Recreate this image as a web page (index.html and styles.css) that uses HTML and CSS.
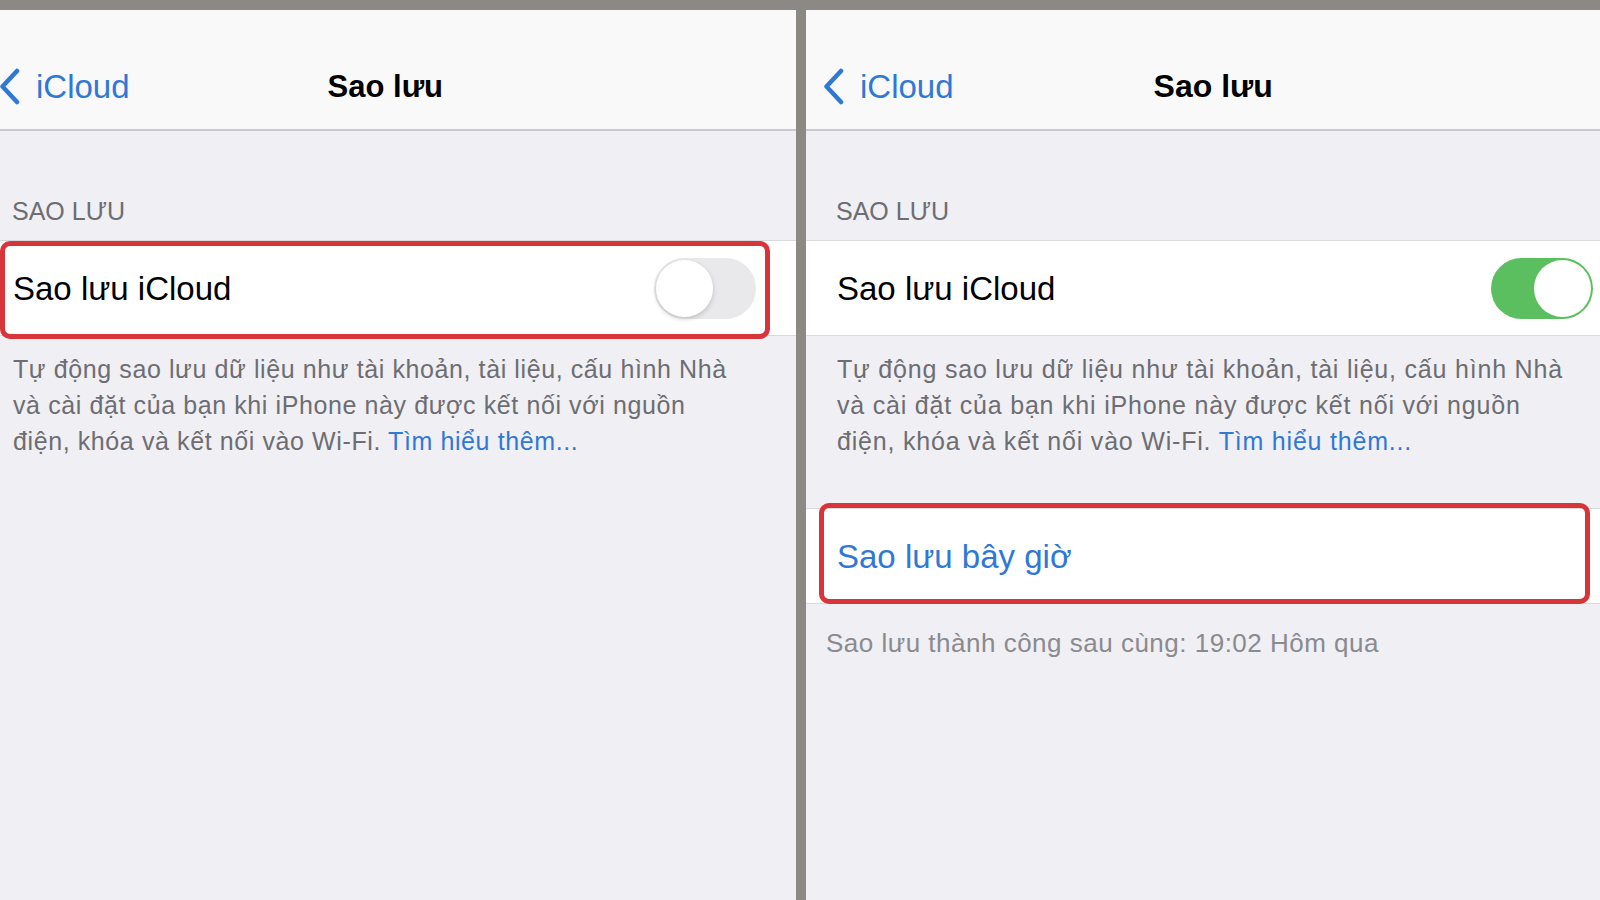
FILE: index.html
```html
<!DOCTYPE html>
<html lang="vi">
<head>
    <meta charset="UTF-8">
    <meta name="viewport" content="width=device-width, initial-scale=1.0">
    <title>Sao lưu iCloud</title>
    <link rel="stylesheet" href="styles.css">
</head>
<body>
    <div class="topbar"></div>

    <div class="split">
        <!-- Before: backup switched off -->
        <div class="panel panel-left">
            <section class="screen">
                <header class="navbar">
                    <a href="#" class="back">
                        <svg class="chevron" width="23" height="37" viewBox="0 0 23 37">
                            <path d="M19 3 L4.5 18.5 L19 34" fill="none" stroke="currentColor" stroke-width="4.5" stroke-linecap="round" stroke-linejoin="round"/>
                        </svg>
                        <span>iCloud</span>
                    </a>
                    <h1 class="title">Sao lưu</h1>
                </header>

                <div class="content">
                    <div class="group-label">SAO LƯU</div>
                    <div class="cell cell-toggle marked">
                        <span class="cell-text">Sao lưu iCloud</span>
                        <span class="switch"><span class="knob"></span></span>
                    </div>
                    <p class="group-footer">
                        Tự động sao lưu dữ liệu như tài khoản, tài liệu, cấu hình Nhà<br>
                        và cài đặt của bạn khi iPhone này được kết nối với nguồn<br>
                        điện, khóa và kết nối vào Wi-Fi. <a href="#">Tìm hiểu thêm...</a>
                    </p>
                </div>
            </section>
        </div>

        <div class="divider"></div>

        <!-- After: backup switched on -->
        <div class="panel panel-right">
            <section class="screen">
                <header class="navbar">
                    <a href="#" class="back">
                        <svg class="chevron" width="23" height="37" viewBox="0 0 23 37">
                            <path d="M19 3 L4.5 18.5 L19 34" fill="none" stroke="currentColor" stroke-width="4.5" stroke-linecap="round" stroke-linejoin="round"/>
                        </svg>
                        <span>iCloud</span>
                    </a>
                    <h1 class="title">Sao lưu</h1>
                </header>

                <div class="content">
                    <div class="group-label">SAO LƯU</div>
                    <div class="cell cell-toggle">
                        <span class="cell-text">Sao lưu iCloud</span>
                        <span class="switch on"><span class="knob"></span></span>
                    </div>
                    <p class="group-footer">
                        Tự động sao lưu dữ liệu như tài khoản, tài liệu, cấu hình Nhà<br>
                        và cài đặt của bạn khi iPhone này được kết nối với nguồn<br>
                        điện, khóa và kết nối vào Wi-Fi. <a href="#">Tìm hiểu thêm...</a>
                    </p>

                    <div class="cell cell-action marked">
                        <a href="#" class="cell-link">Sao lưu bây giờ</a>
                    </div>
                    <p class="last-backup">Sao lưu thành công sau cùng: 19:02 Hôm qua</p>
                </div>
            </section>
        </div>
    </div>
</body>
</html>
```

FILE: styles.css
```css
* {
    box-sizing: border-box;
    margin: 0;
    padding: 0;
    font-family: 'Liberation Sans', Arial, sans-serif;
}

html, body {
    width: 1600px;
    height: 900px;
    overflow: hidden;
}

body {
    background-color: #8c8985;
    color: #000;
}

a {
    text-decoration: none;
}

.topbar {
    height: 10px;
    background-color: #8c8985;
}

.split {
    display: flex;
    height: 890px;
}

.panel {
    overflow: hidden;
    background-color: #efeff4;
}

.panel-left {
    width: 796px;
}

.panel-right {
    flex: 1;
}

.divider {
    width: 10px;
    background-color: #8c8985;
}

.screen {
    height: 100%;
}

.panel-left .screen {
    margin-left: -18px;
    width: 814px;
}

/* navigation bar */

.navbar {
    display: flex;
    align-items: center;
    height: 121px;
    padding: 34px 0 0 16px;
    background-color: #f9f9fa;
    border-bottom: 2px solid #c9c9cd;
}

.back {
    display: flex;
    align-items: center;
    gap: 15px;
    color: #2f78d6;
    font-size: 33px;
    line-height: 37px;
}

.chevron {
    display: block;
}

.title {
    margin-left: 198px;
    font-size: 31px;
    line-height: 37px;
    font-weight: bold;
}

.panel-right .title {
    margin-left: 200px;
    font-size: 32px;
}

/* grouped list */

.content {
    padding-top: 65px;
}

.group-label {
    padding-left: 30px;
    font-size: 25px;
    line-height: 30px;
    color: #6d6d72;
}

.cell {
    position: relative;
    display: flex;
    align-items: center;
    justify-content: space-between;
    height: 96px;
    padding-left: 31px;
    background-color: #fff;
    border-top: 1px solid #d9d9dd;
    border-bottom: 1px solid #d9d9dd;
}

.cell-toggle {
    margin-top: 14px;
}

.panel-left .cell-toggle {
    padding-right: 40px;
}

.panel-right .cell-toggle {
    padding-right: 7px;
}

.cell-text {
    font-size: 33px;
    line-height: 37px;
}

.cell-action {
    margin-top: 49px;
}

.cell-link {
    color: #2f78d6;
    font-size: 33px;
    line-height: 37px;
}

/* red annotation frames drawn over the rows */

.marked::after {
    content: '';
    position: absolute;
    border: 5px solid #d8353b;
    border-radius: 10px;
}

.panel-left .marked::after {
    left: 18px;
    right: 26px;
    top: 0;
    bottom: -4px;
}

.panel-right .marked::after {
    left: 13px;
    right: 10px;
    top: -6px;
    bottom: -1px;
}

/* switches */

.switch {
    display: flex;
    align-items: center;
    width: 102px;
    height: 61px;
    padding: 2px;
    border-radius: 31px;
    background-color: #e9e9eb;
}

.switch.on {
    justify-content: flex-end;
    background-color: #5cbf5f;
}

.knob {
    width: 57px;
    height: 57px;
    border-radius: 50%;
    background-color: #fff;
    box-shadow: 0 2px 5px rgba(0, 0, 0, 0.18);
}

.switch.on .knob {
    box-shadow: none;
}

/* footers */

.group-footer {
    margin-top: 15px;
    padding-left: 31px;
    font-size: 25px;
    line-height: 36px;
    letter-spacing: 0.6px;
    color: #6d6d72;
}

.panel-right .group-footer {
    letter-spacing: 0.8px;
}

.group-footer a {
    color: #2f78d6;
}

.last-backup {
    margin-top: 24px;
    padding-left: 20px;
    font-size: 26px;
    line-height: 30px;
    letter-spacing: 0.5px;
    color: #8a8a8f;
}
```
